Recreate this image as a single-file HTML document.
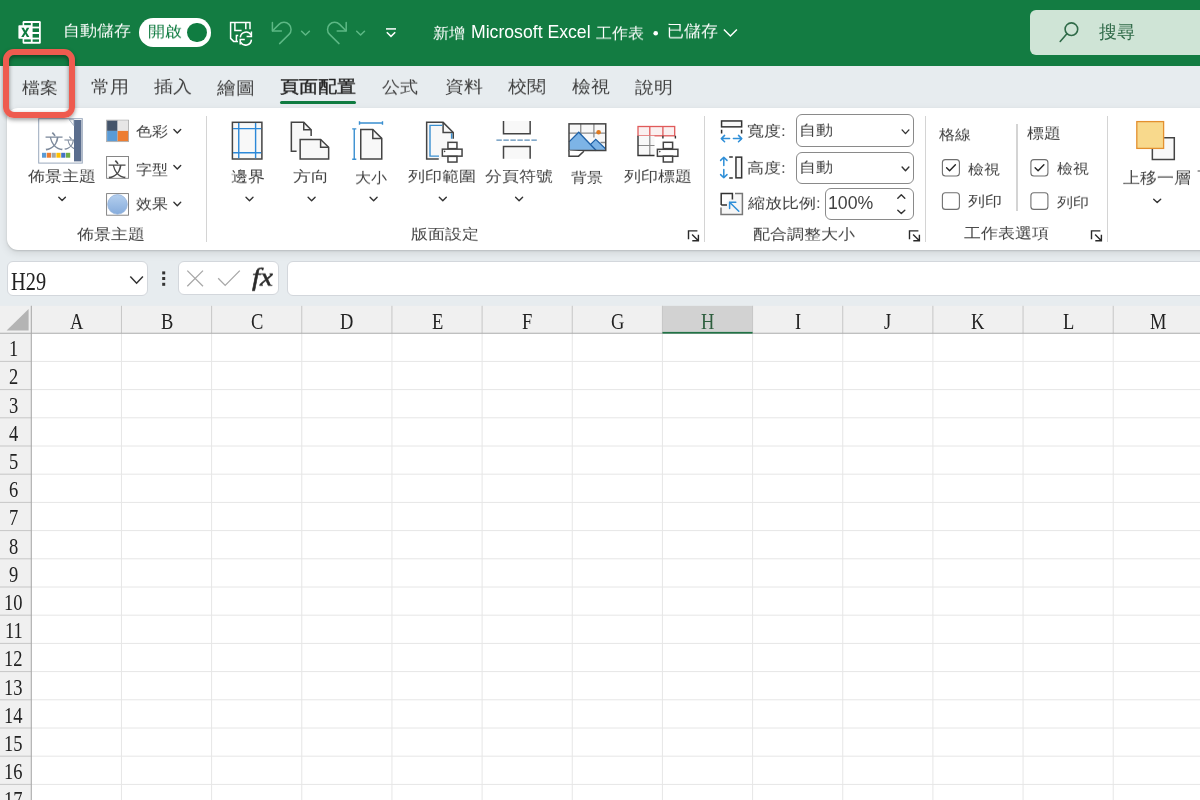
<!DOCTYPE html>
<html><head><meta charset="utf-8"><style>
html,body{margin:0;padding:0;}
body{width:1200px;height:800px;overflow:hidden;position:relative;background:#E7ECEF;font-family:'Liberation Sans',sans-serif;}
.t{position:absolute;white-space:nowrap;line-height:1;transform-origin:0 0;will-change:transform;}
svg{will-change:transform;}
.abs{position:absolute;}
</style></head><body>
<div class="abs" style="left:0;top:0;width:1200px;height:65.8px;background:#137C42"></div>
<div class="abs" style="left:139px;top:18.2px;width:72.4px;height:28.5px;border-radius:14.25px;background:#fff"></div>
<div class="abs" style="left:187.2px;top:22.6px;width:19.4px;height:19.4px;border-radius:50%;background:#107C41"></div>
<div class="abs" style="left:1029.5px;top:10.2px;width:220px;height:44.5px;border-radius:6px;background:#CFE4D6"></div>
<div class="abs" style="left:7px;top:108px;width:1230px;height:141.6px;border-radius:11px;background:#fff;box-shadow:0 1px 2px rgba(0,0,0,0.14), 0 3px 9px rgba(0,0,0,0.10)"></div>
<div class="abs" style="left:206.1px;top:116px;width:1.2px;height:125.5px;background:#D4D4D4"></div>
<div class="abs" style="left:703.9px;top:116px;width:1.2px;height:125.5px;background:#D4D4D4"></div>
<div class="abs" style="left:924.6px;top:116px;width:1.2px;height:125.5px;background:#D4D4D4"></div>
<div class="abs" style="left:1106.6px;top:116px;width:1.2px;height:125.5px;background:#D4D4D4"></div>
<div class="abs" style="left:1016.4px;top:123.8px;width:1.2px;height:87.2px;background:#D4D4D4"></div>
<div class="abs" style="left:796.3px;top:114.4px;width:117.7px;height:32.2px;border:1.2px solid #8A8A8A;border-radius:6px;box-sizing:border-box;background:#fff"></div>
<div class="abs" style="left:796.3px;top:151.5px;width:117.7px;height:32.2px;border:1.2px solid #8A8A8A;border-radius:6px;box-sizing:border-box;background:#fff"></div>
<div class="abs" style="left:825px;top:188.4px;width:89px;height:31.9px;border:1.2px solid #8A8A8A;border-radius:6px;box-sizing:border-box;background:#fff"></div>
<div class="abs" style="left:7.4px;top:261.2px;width:141px;height:34.4px;border:1px solid #D3D7DC;border-radius:6px;box-sizing:border-box;background:#fff"></div>
<div class="abs" style="left:178px;top:261.2px;width:101px;height:34px;border:1px solid #D3D7DC;border-radius:6px;box-sizing:border-box;background:#fff"></div>
<div class="abs" style="left:286.6px;top:261.1px;width:1000px;height:34.5px;border:1px solid #D3D7DC;border-radius:6px;box-sizing:border-box;background:#fff"></div>
<div class="abs" style="left:280px;top:100.8px;width:76px;height:3.2px;border-radius:1.6px;background:#107C41"></div>

<svg class="abs" style="left:0;top:0" width="1200" height="800" viewBox="0 0 1200 800">
<rect x="0" y="305.8" width="1200" height="27.399999999999977" fill="#F0F0F0"/>
<rect x="0" y="333.2" width="31.3" height="466.8" fill="#F0F0F0"/>
<rect x="31.3" y="333.2" width="1168.7" height="466.8" fill="#FFFFFF"/>
<rect x="662.42" y="305.8" width="90.16" height="27.399999999999977" fill="#D2D2D2"/>
<line x1="121.46" y1="333.2" x2="121.46" y2="800" stroke="#E6E6E6" stroke-width="1"/>
<line x1="121.46" y1="305.8" x2="121.46" y2="333.2" stroke="#C6C6C6" stroke-width="1"/>
<line x1="211.62" y1="333.2" x2="211.62" y2="800" stroke="#E6E6E6" stroke-width="1"/>
<line x1="211.62" y1="305.8" x2="211.62" y2="333.2" stroke="#C6C6C6" stroke-width="1"/>
<line x1="301.78" y1="333.2" x2="301.78" y2="800" stroke="#E6E6E6" stroke-width="1"/>
<line x1="301.78" y1="305.8" x2="301.78" y2="333.2" stroke="#C6C6C6" stroke-width="1"/>
<line x1="391.94" y1="333.2" x2="391.94" y2="800" stroke="#E6E6E6" stroke-width="1"/>
<line x1="391.94" y1="305.8" x2="391.94" y2="333.2" stroke="#C6C6C6" stroke-width="1"/>
<line x1="482.10" y1="333.2" x2="482.10" y2="800" stroke="#E6E6E6" stroke-width="1"/>
<line x1="482.10" y1="305.8" x2="482.10" y2="333.2" stroke="#C6C6C6" stroke-width="1"/>
<line x1="572.26" y1="333.2" x2="572.26" y2="800" stroke="#E6E6E6" stroke-width="1"/>
<line x1="572.26" y1="305.8" x2="572.26" y2="333.2" stroke="#C6C6C6" stroke-width="1"/>
<line x1="662.42" y1="333.2" x2="662.42" y2="800" stroke="#E6E6E6" stroke-width="1"/>
<line x1="662.42" y1="305.8" x2="662.42" y2="333.2" stroke="#C6C6C6" stroke-width="1"/>
<line x1="752.58" y1="333.2" x2="752.58" y2="800" stroke="#E6E6E6" stroke-width="1"/>
<line x1="752.58" y1="305.8" x2="752.58" y2="333.2" stroke="#C6C6C6" stroke-width="1"/>
<line x1="842.74" y1="333.2" x2="842.74" y2="800" stroke="#E6E6E6" stroke-width="1"/>
<line x1="842.74" y1="305.8" x2="842.74" y2="333.2" stroke="#C6C6C6" stroke-width="1"/>
<line x1="932.90" y1="333.2" x2="932.90" y2="800" stroke="#E6E6E6" stroke-width="1"/>
<line x1="932.90" y1="305.8" x2="932.90" y2="333.2" stroke="#C6C6C6" stroke-width="1"/>
<line x1="1023.06" y1="333.2" x2="1023.06" y2="800" stroke="#E6E6E6" stroke-width="1"/>
<line x1="1023.06" y1="305.8" x2="1023.06" y2="333.2" stroke="#C6C6C6" stroke-width="1"/>
<line x1="1113.22" y1="333.2" x2="1113.22" y2="800" stroke="#E6E6E6" stroke-width="1"/>
<line x1="1113.22" y1="305.8" x2="1113.22" y2="333.2" stroke="#C6C6C6" stroke-width="1"/>
<line x1="1203.38" y1="333.2" x2="1203.38" y2="800" stroke="#E6E6E6" stroke-width="1"/>
<line x1="1203.38" y1="305.8" x2="1203.38" y2="333.2" stroke="#C6C6C6" stroke-width="1"/>
<line x1="31.3" y1="361.40" x2="1200" y2="361.40" stroke="#E6E6E6" stroke-width="1"/>
<line x1="0" y1="361.40" x2="31.3" y2="361.40" stroke="#C6C6C6" stroke-width="1"/>
<line x1="31.3" y1="389.60" x2="1200" y2="389.60" stroke="#E6E6E6" stroke-width="1"/>
<line x1="0" y1="389.60" x2="31.3" y2="389.60" stroke="#C6C6C6" stroke-width="1"/>
<line x1="31.3" y1="417.80" x2="1200" y2="417.80" stroke="#E6E6E6" stroke-width="1"/>
<line x1="0" y1="417.80" x2="31.3" y2="417.80" stroke="#C6C6C6" stroke-width="1"/>
<line x1="31.3" y1="446.00" x2="1200" y2="446.00" stroke="#E6E6E6" stroke-width="1"/>
<line x1="0" y1="446.00" x2="31.3" y2="446.00" stroke="#C6C6C6" stroke-width="1"/>
<line x1="31.3" y1="474.20" x2="1200" y2="474.20" stroke="#E6E6E6" stroke-width="1"/>
<line x1="0" y1="474.20" x2="31.3" y2="474.20" stroke="#C6C6C6" stroke-width="1"/>
<line x1="31.3" y1="502.40" x2="1200" y2="502.40" stroke="#E6E6E6" stroke-width="1"/>
<line x1="0" y1="502.40" x2="31.3" y2="502.40" stroke="#C6C6C6" stroke-width="1"/>
<line x1="31.3" y1="530.60" x2="1200" y2="530.60" stroke="#E6E6E6" stroke-width="1"/>
<line x1="0" y1="530.60" x2="31.3" y2="530.60" stroke="#C6C6C6" stroke-width="1"/>
<line x1="31.3" y1="558.80" x2="1200" y2="558.80" stroke="#E6E6E6" stroke-width="1"/>
<line x1="0" y1="558.80" x2="31.3" y2="558.80" stroke="#C6C6C6" stroke-width="1"/>
<line x1="31.3" y1="587.00" x2="1200" y2="587.00" stroke="#E6E6E6" stroke-width="1"/>
<line x1="0" y1="587.00" x2="31.3" y2="587.00" stroke="#C6C6C6" stroke-width="1"/>
<line x1="31.3" y1="615.20" x2="1200" y2="615.20" stroke="#E6E6E6" stroke-width="1"/>
<line x1="0" y1="615.20" x2="31.3" y2="615.20" stroke="#C6C6C6" stroke-width="1"/>
<line x1="31.3" y1="643.40" x2="1200" y2="643.40" stroke="#E6E6E6" stroke-width="1"/>
<line x1="0" y1="643.40" x2="31.3" y2="643.40" stroke="#C6C6C6" stroke-width="1"/>
<line x1="31.3" y1="671.60" x2="1200" y2="671.60" stroke="#E6E6E6" stroke-width="1"/>
<line x1="0" y1="671.60" x2="31.3" y2="671.60" stroke="#C6C6C6" stroke-width="1"/>
<line x1="31.3" y1="699.80" x2="1200" y2="699.80" stroke="#E6E6E6" stroke-width="1"/>
<line x1="0" y1="699.80" x2="31.3" y2="699.80" stroke="#C6C6C6" stroke-width="1"/>
<line x1="31.3" y1="728.00" x2="1200" y2="728.00" stroke="#E6E6E6" stroke-width="1"/>
<line x1="0" y1="728.00" x2="31.3" y2="728.00" stroke="#C6C6C6" stroke-width="1"/>
<line x1="31.3" y1="756.20" x2="1200" y2="756.20" stroke="#E6E6E6" stroke-width="1"/>
<line x1="0" y1="756.20" x2="31.3" y2="756.20" stroke="#C6C6C6" stroke-width="1"/>
<line x1="31.3" y1="784.40" x2="1200" y2="784.40" stroke="#E6E6E6" stroke-width="1"/>
<line x1="0" y1="784.40" x2="31.3" y2="784.40" stroke="#C6C6C6" stroke-width="1"/>
<line x1="31.3" y1="812.60" x2="1200" y2="812.60" stroke="#E6E6E6" stroke-width="1"/>
<line x1="0" y1="812.60" x2="31.3" y2="812.60" stroke="#C6C6C6" stroke-width="1"/>
<line x1="0" y1="333.2" x2="1200" y2="333.2" stroke="#ABABAB" stroke-width="1.1"/>
<line x1="31.3" y1="305.8" x2="31.3" y2="800" stroke="#ABABAB" stroke-width="1.1"/>
<rect x="662.42" y="331.90" width="90.16" height="1.7" fill="#217346"/>
<path d="M6.6 330.6 L28.6 309 L28.6 330.6 Z" fill="#B4B4B4"/>
</svg>
<svg class="abs" style="left:0;top:0" width="1200" height="800" viewBox="0 0 1200 800">
<!-- Excel logo -->
<rect x="22.6" y="21" width="18.2" height="22.8" rx="1.3" fill="#fff"/>
<rect x="24.2" y="23" width="6.6" height="2.6" fill="#107C41"/>
<rect x="24.2" y="39.4" width="6.6" height="2.4" fill="#107C41"/>
<rect x="32.6" y="23" width="6.4" height="3.6" fill="#107C41"/>
<rect x="32.6" y="28.4" width="6.4" height="3.6" fill="#107C41"/>
<rect x="32.6" y="34" width="6.4" height="3.6" fill="#107C41"/>
<rect x="32.6" y="39.4" width="6.4" height="2.4" fill="#107C41"/>
<rect x="18.4" y="25.2" width="13.2" height="13.6" rx="0.8" fill="#fff"/>
<path d="M21.3 27.8 L23.8 27.8 L25.3 30.7 L26.8 27.8 L29.3 27.8 L26.6 32.4 L29.4 37 L26.9 37 L25.3 34.1 L23.7 37 L21.2 37 L24 32.4 Z" fill="#107C41"/>
<!-- save icon -->
<g fill="none" stroke="#fff" stroke-width="1.5" stroke-linejoin="miter">
<path d="M238 41.4 L233.6 41.4 L230.6 38.4 L230.6 22.4 L250 22.4 L250 29.2"/>
<path d="M234.9 22.4 L234.9 30.6 L241.6 30.6"/>
<path d="M245.8 22.4 L245.8 29.2"/>
<path d="M236.4 41.4 L236.4 35.6 L238.2 35.6"/>
<path d="M240.3 37.4 A5.8 5.8 0 0 1 251.2 35.2"/>
<path d="M251.4 39.6 A5.8 5.8 0 0 1 240.6 42.2"/>
<path d="M251.4 31.6 L251.4 36.6 L246.6 36.6"/>
<path d="M240.2 44.6 L240.2 39.6 L244.8 39.6"/>
</g>
<!-- undo/redo -->
<g fill="none" stroke="#5DB885" stroke-width="1.5" stroke-linecap="round" stroke-linejoin="round">
<path d="M272.4 22.4 L272.4 31 L281.4 31"/>
<path d="M272.6 30.8 L279 24.4 A7 7 0 0 1 289 34.4 L279.6 43.6"/>
<path d="M301.6 31.2 L305.5 35 L309.4 31.2"/>
<g transform="translate(618.6 0) scale(-1 1)">
<path d="M272.4 22.4 L272.4 31 L281.4 31"/>
<path d="M272.6 30.8 L279 24.4 A7 7 0 0 1 289 34.4 L279.6 43.6"/>
</g>
<path d="M356.7 31.2 L360.6 35 L364.5 31.2"/>
</g>
<g fill="none" stroke="#fff" stroke-width="1.5">
<path d="M386 28.9 L396 28.9"/>
<path d="M386.8 32.2 L391 36.4 L395.2 32.2"/>
<path d="M723.9 29.5 L730.4 36 L736.9 29.5"/>
</g>
<circle cx="655.7" cy="33.3" r="2.3" fill="#fff"/>
<!-- search -->
<g fill="none" stroke="#2F6A48" stroke-width="1.6" stroke-linecap="round">
<circle cx="1071.4" cy="29.2" r="6.3"/>
<path d="M1066.9 33.8 L1060.2 41.5"/>
</g>
<!-- theme icon -->
<rect x="38.7" y="118.7" width="43.6" height="44.4" fill="#fff" stroke="#9AA8BC" stroke-width="1"/>
<text x="45" y="148.3" font-size="19" fill="#7D8A9C" font-family="'Liberation Sans',sans-serif">文</text>
<text x="63.6" y="147.8" font-size="13.5" fill="#7D8A9C" font-family="'Liberation Sans',sans-serif">文</text>
<rect x="74" y="120" width="7.4" height="41.4" fill="#5A6D8D"/>
<path d="M69.2 119.6 L73.8 119.6 L73.8 125.6 Z" fill="#F4F4F4" stroke="#9AA8BC" stroke-width="0.8"/>
<rect x="42" y="152.8" width="4.2" height="4.9" fill="#5B9BD5"/>
<rect x="46.8" y="152.8" width="4.2" height="4.9" fill="#ED7D31"/>
<rect x="51.6" y="152.8" width="4.2" height="4.9" fill="#A5A5A5"/>
<rect x="56.4" y="152.8" width="4.2" height="4.9" fill="#FFC000"/>
<rect x="61.2" y="152.8" width="4.2" height="4.9" fill="#4472C4"/>
<rect x="66" y="152.8" width="4.2" height="4.9" fill="#70AD47"/>
<!-- colors icon -->
<rect x="106.6" y="120.2" width="21.9" height="21.4" fill="#fff" stroke="#A8A8A8" stroke-width="0.9"/>
<rect x="107.1" y="120.7" width="10.5" height="10.2" fill="#44546A"/>
<rect x="117.6" y="120.7" width="10.5" height="10.2" fill="#E7E6E6"/>
<rect x="107.1" y="130.9" width="10.5" height="10.2" fill="#5B9BD5"/>
<rect x="117.6" y="130.9" width="10.5" height="10.2" fill="#ED7D31"/>
<!-- fonts icon -->
<rect x="106.6" y="156.5" width="21.9" height="21.8" fill="#fff" stroke="#7A7A7A" stroke-width="0.9"/>
<text x="107.6" y="176" font-size="19" fill="#4A4A4A" font-family="'Liberation Serif',serif">文</text>
<!-- effects icon -->
<defs><linearGradient id="eg" x1="0" y1="0" x2="0" y2="1"><stop offset="0" stop-color="#B4CFEE"/><stop offset="1" stop-color="#86ACDC"/></linearGradient></defs>
<rect x="106.6" y="193.6" width="21.9" height="21.6" fill="#fff" stroke="#7A7A7A" stroke-width="0.9"/>
<circle cx="117.5" cy="204.4" r="9.8" fill="url(#eg)" stroke="#93B3DC" stroke-width="0.8"/>
<!-- margins -->
<rect x="232.4" y="122.3" width="29.5" height="36.7" fill="#F8F8F8" stroke="#444" stroke-width="1.5"/>
<path d="M238.75 123 V158.3 M255.6 123 V158.3 M233.1 128.6 H261.2 M233.1 152.8 H261.2" stroke="#2B88D8" stroke-width="1.4" fill="none"/>
<!-- orientation -->
<g stroke="#444" stroke-width="1.5" fill="#F8F8F8">
<path d="M291.35 122.35 H303.75 L311.15 129.75 V151.25 H291.35 Z" stroke="none"/>
<path d="M296.6 151.25 H291.35 V122.35 H303.75 L311.15 129.75 V136" fill="none"/>
<path d="M303.75 122.35 V129.8 H311.15" fill="none"/>
<path d="M300.15 139.5 H320.6 L328.65 147.2 V158.95 H300.15 Z"/>
<path d="M320.6 139.5 V147.2 H328.65" fill="none"/>
</g>
<!-- size -->
<g stroke="#3A8FD0" stroke-width="1.4" fill="none">
<path d="M359.5 123 H382.5 M359.5 121.2 V124.8 M382.5 121.2 V124.8"/>
<path d="M354.25 128.6 V159.5 M352.2 128.9 H356.3 M352.2 159.2 H356.3"/>
</g>
<g stroke="#444" stroke-width="1.5" fill="#F8F8F8">
<path d="M360.75 129.5 H372.8 L381.75 138.4 V158.95 H360.75 Z"/>
<path d="M372.8 129.5 V138.4 H381.75" fill="none"/>
</g>
<!-- print area -->
<g stroke="#444" stroke-width="1.5" fill="#F8F8F8">
<path d="M426.65 122.35 H443.1 L453.25 132.5 V158.95 H426.65 Z" stroke="none"/>
<path d="M438.75 158.95 H426.65 V122.35 H443.1 L453.25 132.5 V138.75" fill="none"/>
<path d="M443.1 122.35 V132.5 H453.25" fill="none"/>
</g>
<path d="M439 156.1 H430 V125.4 H442.3 M451.6 133.3 V138.7" stroke="#3A8FD0" stroke-width="1.4" fill="none"/>
<g stroke="#444" stroke-width="1.5" fill="#fff">
<rect x="447.95" y="142.35" width="9" height="6.3"/>
<rect x="442.35" y="149.15" width="19.7" height="7"/>
<rect x="447.95" y="156.35" width="9" height="5.7"/>
</g>
<circle cx="444.6" cy="151.4" r="0.8" fill="#444"/>
<!-- breaks -->
<rect x="503.5" y="120.9" width="26.65" height="12.75" fill="#F8F8F8"/>
<rect x="503.5" y="146.5" width="26.65" height="12.25" fill="#F8F8F8"/>
<g stroke="#444" stroke-width="1.5" fill="none">
<path d="M503.5 120.9 V133.65 H530.15 V120.9"/>
<path d="M503.5 158.75 V146.5 H530.15 V158.75"/>
</g>
<path d="M496.4 140.1 H537.2" stroke="#5B8DB8" stroke-width="1.4" stroke-dasharray="5.4 1.6" fill="none"/>
<!-- background -->
<rect x="569" y="123.85" width="36.75" height="26.65" fill="#F8F8F8"/>
<path d="M580.75 123.85 V140 M593.9 123.85 V137.5 M569 133.1 H605.75 M600.5 142.5 H605.75" stroke="#8A8A8A" stroke-width="1.3" fill="none"/>
<path d="M569 141.9 L578.75 132.2 L590.3 144.6 L595.75 139.4 L605.75 149 V150.5 H569 Z" fill="#7DB4E6"/>
<path d="M569 141.9 L578.75 132.2 L596.4 150.8 M590.3 144.6 L595.75 139.4 L605.75 149" stroke="#1F62A8" stroke-width="1.3" fill="none"/>
<rect x="569" y="123.85" width="36.75" height="26.65" fill="none" stroke="#444" stroke-width="1.5"/>
<path d="M569 150.5 V156.15 H578.6 L583.9 151.25" stroke="#444" stroke-width="1.5" fill="#fff"/>
<circle cx="598.6" cy="132.2" r="2.3" fill="#E07A1F"/>
<!-- print titles -->
<rect x="638" y="126.5" width="36.7" height="9.3" fill="#FAF0F0" stroke="#E05A5A" stroke-width="1.3"/>
<path d="M649.8 126.5 V135.8 M662.9 126.5 V135.8" stroke="#E05A5A" stroke-width="1.3"/>
<rect x="638" y="135.8" width="16.5" height="19.7" fill="#F8F8F8"/>
<path d="M638 145.5 H654.5 M649.8 135.8 V155.5" stroke="#8A8A8A" stroke-width="1.2" fill="none"/>
<path d="M638 135.8 V155.5 H654.5 M662.9 135.8 V138.6 M675.4 135.8 V138.6" stroke="#333" stroke-width="1.4" fill="none"/>
<g stroke="#444" stroke-width="1.5" fill="#fff">
<rect x="663.3" y="142.3" width="9.3" height="6.3"/>
<rect x="657.4" y="149.3" width="20.5" height="7"/>
<rect x="663.3" y="156.2" width="9.3" height="5.8"/>
</g>
<circle cx="659.8" cy="151.6" r="0.8" fill="#444"/>
<!-- width / height / scale -->
<rect x="721.55" y="120.95" width="20.1" height="5.9" fill="#F8F8F8" stroke="#333" stroke-width="1.5"/>
<path d="M721.6 129.8 V133.6 M741.6 129.8 V133.6" stroke="#333" stroke-width="1.5"/>
<g stroke="#2F8FD8" stroke-width="1.5" fill="none" stroke-linecap="round" stroke-linejoin="round">
<path d="M721.3 138.6 H729.6 M724.6 135.4 L721.3 138.6 L724.6 141.8"/>
<path d="M733.4 138.6 H741.8 M738.5 135.4 L741.8 138.6 L738.5 141.8"/>
<path d="M723.8 157.2 V165.6 M720.6 160.4 L723.8 157.2 L727 160.4"/>
<path d="M723.8 169.4 V177.8 M720.6 174.6 L723.8 177.8 L727 174.6"/>
</g>
<path d="M729.2 157 H732.8 M729.2 178 H732.8" stroke="#333" stroke-width="1.5"/>
<rect x="735.95" y="157.15" width="5.7" height="20.7" fill="#F8F8F8" stroke="#333" stroke-width="1.5"/>
<path d="M735 193.4 H742.4 V214.6 H721 V207.4" stroke="#777" stroke-width="1.5" fill="#F6F6F6"/>
<path d="M721.2 205 V193.4 H732.4 V199.6 M721.2 205 H727" stroke="#333" stroke-width="1.5" fill="none"/>
<g stroke="#2F8FD8" stroke-width="1.5" fill="none" stroke-linecap="round">
<path d="M738.8 211.2 L729.6 202.2 M729.6 202.2 H735.8 M729.6 202.2 V208.4"/>
</g>
<!-- bring forward -->
<path d="M1164.1 137.65 H1174.3 V159.6 H1152.35 V149" stroke="#444" stroke-width="1.5" fill="#F8F8F8"/>
<rect x="1136.8" y="121.6" width="26.8" height="26.8" fill="#F8D98C" stroke="#E3902F" stroke-width="1.3"/>
<!-- chevrons -->
<g fill="none" stroke="#333" stroke-width="1.4" stroke-linecap="round" stroke-linejoin="round">
<path d="M58.8 197.3 L62.1 200.6 L65.4 197.3"/>
<path d="M246 197.3 L249.5 200.8 L253 197.3"/>
<path d="M308.1 197.3 L311.6 200.8 L315.1 197.3"/>
<path d="M370.1 197.3 L373.6 200.8 L377.1 197.3"/>
<path d="M439.3 197.3 L442.8 200.8 L446.3 197.3"/>
<path d="M515.6 197.3 L519.1 200.8 L522.6 197.3"/>
<path d="M1153.7 199.2 L1157.2 202.5 L1160.7 199.2"/>
<path d="M173.9 129.5 L177.3 133 L180.7 129.5"/>
<path d="M173.9 165.5 L177.3 169 L180.7 165.5"/>
<path d="M173.9 202.3 L177.3 205.8 L180.7 202.3"/>
<path d="M902.1 129.9 L905.5 133.6 L908.9 129.9"/>
<path d="M902.1 167 L905.5 170.7 L908.9 167"/>
<path d="M897.8 198.2 L901.3 194.8 L904.8 198.2"/>
<path d="M897.8 210.2 L901.3 213.6 L904.8 210.2"/>
</g>
<!-- dialog launchers -->
<g fill="none" stroke="#2A2A2A" stroke-width="1.4">
<path transform="translate(688.5 230.9)" d="M0 8.4 V0 H8.9 M3.6 3.6 L9.9 9.8 M9.9 3.9 V9.8 H3.8"/>
<path transform="translate(909.5 230.9)" d="M0 8.4 V0 H8.9 M3.6 3.6 L9.9 9.8 M9.9 3.9 V9.8 H3.8"/>
<path transform="translate(1091.5 230.9)" d="M0 8.4 V0 H8.9 M3.6 3.6 L9.9 9.8 M9.9 3.9 V9.8 H3.8"/>
</g>
<!-- checkboxes -->
<g fill="#fff" stroke="#707070" stroke-width="1.1">
<rect x="942.4" y="159.6" width="17" height="16.4" rx="3"/>
<rect x="942.4" y="192.8" width="17" height="16.6" rx="3"/>
<rect x="1030.9" y="159.6" width="17" height="16.4" rx="3"/>
<rect x="1030.9" y="192.8" width="17" height="16.6" rx="3"/>
</g>
<g fill="none" stroke="#242424" stroke-width="1.4" stroke-linecap="round" stroke-linejoin="round">
<path d="M946.6 167.8 L949.6 170.8 L955.4 164.8"/>
<path d="M1035.1 167.8 L1038.1 170.8 L1043.9 164.8"/>
</g>
<!-- formula bar -->
<path d="M130.3 276.5 L136.6 283.2 L142.9 276.5" fill="none" stroke="#333" stroke-width="1.5"/>
<rect x="162.2" y="271.4" width="3" height="3" fill="#333"/>
<rect x="162.2" y="277" width="3" height="3" fill="#333"/>
<rect x="162.2" y="282.8" width="3" height="3" fill="#333"/>
<path d="M187.3 270.6 L203 286.3 M203 270.6 L187.3 286.3" stroke="#A8A8A8" stroke-width="1.3"/>
<path d="M218.2 278.2 L225.2 285.4 L239.8 270.6" fill="none" stroke="#A8A8A8" stroke-width="1.3"/>
<rect x="1197.6" y="170.4" width="2.4" height="1.2" fill="#666"/>

</svg>
<div class="t" style="left:63.10px;top:24.08px;font-size:16.89px;color:#fff;font-family:'Liberation Sans',sans-serif;font-weight:normal;font-style:normal;transform:scaleY(0.9131);">自動儲存</div>
<div class="t" style="left:148.01px;top:25.16px;font-size:16.58px;color:#107C41;font-family:'Liberation Sans',sans-serif;font-weight:normal;font-style:normal;transform:scaleY(0.8889);">開啟</div>
<div class="t" style="left:432.67px;top:24.94px;font-size:16.42px;color:#fff;font-family:'Liberation Sans',sans-serif;font-weight:normal;font-style:normal;transform:scaleY(0.9450);">新增</div>
<div class="t" style="left:470.59px;top:23.52px;font-size:17.65px;color:#fff;font-family:'Liberation Sans',sans-serif;font-weight:normal;font-style:normal;">Microsoft Excel</div>
<div class="t" style="left:595.97px;top:24.63px;font-size:16.38px;color:#fff;font-family:'Liberation Sans',sans-serif;font-weight:normal;font-style:normal;transform:scaleY(0.9574);">工作表</div>
<div class="t" style="left:666.81px;top:24.47px;font-size:16.52px;color:#fff;font-family:'Liberation Sans',sans-serif;font-weight:normal;font-style:normal;transform:scaleY(0.9598);">已儲存</div>
<div class="t" style="left:1098.82px;top:22.65px;font-size:18.31px;color:#2F6A48;font-family:'Liberation Sans',sans-serif;font-weight:normal;font-style:normal;">搜尋</div>
<div class="t" style="left:21.72px;top:79.66px;font-size:18.49px;color:#424242;font-family:'Liberation Sans',sans-serif;font-weight:normal;font-style:normal;transform:scaleY(0.8762);">檔案</div>
<div class="t" style="left:90.69px;top:78.98px;font-size:18.82px;color:#424242;font-family:'Liberation Sans',sans-serif;font-weight:normal;font-style:normal;transform:scaleY(0.9159);">常用</div>
<div class="t" style="left:153.56px;top:79.17px;font-size:18.59px;color:#424242;font-family:'Liberation Sans',sans-serif;font-weight:normal;font-style:normal;transform:scaleY(0.8892);">插入</div>
<div class="t" style="left:217.00px;top:78.62px;font-size:19.05px;color:#424242;font-family:'Liberation Sans',sans-serif;font-weight:normal;font-style:normal;transform:scaleY(0.9245);">繪圖</div>
<div class="t" style="left:279.99px;top:78.83px;font-size:18.94px;color:#242424;font-family:'Liberation Sans',sans-serif;font-weight:normal;font-style:normal;transform:scaleY(0.8909);-webkit-text-stroke:0.45px #242424;">頁面配置</div>
<div class="t" style="left:381.82px;top:78.99px;font-size:18.46px;color:#424242;font-family:'Liberation Sans',sans-serif;font-weight:normal;font-style:normal;transform:scaleY(0.9141);">公式</div>
<div class="t" style="left:444.75px;top:79.01px;font-size:18.65px;color:#424242;font-family:'Liberation Sans',sans-serif;font-weight:normal;font-style:normal;transform:scaleY(0.8773);">資料</div>
<div class="t" style="left:508.30px;top:78.99px;font-size:18.92px;color:#424242;font-family:'Liberation Sans',sans-serif;font-weight:normal;font-style:normal;transform:scaleY(0.8920);">校閱</div>
<div class="t" style="left:571.51px;top:79.17px;font-size:18.67px;color:#424242;font-family:'Liberation Sans',sans-serif;font-weight:normal;font-style:normal;transform:scaleY(0.8944);">檢視</div>
<div class="t" style="left:634.81px;top:79.16px;font-size:19.42px;color:#424242;font-family:'Liberation Sans',sans-serif;font-weight:normal;font-style:normal;transform:scaleY(0.8690);">說明</div>
<div class="t" style="left:28.00px;top:170.40px;font-size:16.69px;color:#424242;font-family:'Liberation Sans',sans-serif;font-weight:normal;font-style:normal;transform:scaleY(0.8558);">佈景主題</div>
<div class="t" style="left:231.40px;top:169.80px;font-size:16.68px;color:#424242;font-family:'Liberation Sans',sans-serif;font-weight:normal;font-style:normal;transform:scaleY(0.8931);">邊界</div>
<div class="t" style="left:293.22px;top:170.40px;font-size:17.60px;color:#424242;font-family:'Liberation Sans',sans-serif;font-weight:normal;font-style:normal;transform:scaleY(0.8118);">方向</div>
<div class="t" style="left:354.94px;top:169.96px;font-size:16.41px;color:#424242;font-family:'Liberation Sans',sans-serif;font-weight:normal;font-style:normal;transform:scaleY(0.8980);">大小</div>
<div class="t" style="left:407.73px;top:169.96px;font-size:16.82px;color:#424242;font-family:'Liberation Sans',sans-serif;font-weight:normal;font-style:normal;transform:scaleY(0.8670);">列印範圍</div>
<div class="t" style="left:484.97px;top:169.82px;font-size:16.72px;color:#424242;font-family:'Liberation Sans',sans-serif;font-weight:normal;font-style:normal;transform:scaleY(0.8723);">分頁符號</div>
<div class="t" style="left:571.17px;top:170.11px;font-size:16.44px;color:#424242;font-family:'Liberation Sans',sans-serif;font-weight:normal;font-style:normal;transform:scaleY(0.8688);">背景</div>
<div class="t" style="left:623.83px;top:169.96px;font-size:16.73px;color:#424242;font-family:'Liberation Sans',sans-serif;font-weight:normal;font-style:normal;transform:scaleY(0.8714);">列印標題</div>
<div class="t" style="left:1122.57px;top:170.83px;font-size:16.63px;color:#424242;font-family:'Liberation Sans',sans-serif;font-weight:normal;font-style:normal;transform:scaleY(0.9370);">上移一層</div>
<div class="t" style="left:135.68px;top:125.16px;font-size:15.90px;color:#424242;font-family:'Liberation Sans',sans-serif;font-weight:normal;font-style:normal;transform:scaleY(0.8430);">色彩</div>
<div class="t" style="left:135.52px;top:161.70px;font-size:16.06px;color:#424242;font-family:'Liberation Sans',sans-serif;font-weight:normal;font-style:normal;transform:scaleY(0.8894);">字型</div>
<div class="t" style="left:135.84px;top:197.29px;font-size:15.98px;color:#424242;font-family:'Liberation Sans',sans-serif;font-weight:normal;font-style:normal;transform:scaleY(0.9017);">效果</div>
<div class="t" style="left:77.00px;top:227.70px;font-size:16.54px;color:#424242;font-family:'Liberation Sans',sans-serif;font-weight:normal;font-style:normal;transform:scaleY(0.8637);">佈景主題</div>
<div class="t" style="left:411.26px;top:227.70px;font-size:16.79px;color:#424242;font-family:'Liberation Sans',sans-serif;font-weight:normal;font-style:normal;transform:scaleY(0.8422);">版面設定</div>
<div class="t" style="left:752.56px;top:227.56px;font-size:16.77px;color:#424242;font-family:'Liberation Sans',sans-serif;font-weight:normal;font-style:normal;transform:scaleY(0.8520);">配合調整大小</div>
<div class="t" style="left:963.67px;top:227.27px;font-size:16.70px;color:#424242;font-family:'Liberation Sans',sans-serif;font-weight:normal;font-style:normal;transform:scaleY(0.8554);">工作表選項</div>
<div class="t" style="left:747.24px;top:123.90px;font-size:17.10px;color:#424242;font-family:'Liberation Sans',sans-serif;font-weight:normal;font-style:normal;transform:scaleY(0.8557);">寬度:</div>
<div class="t" style="left:747.24px;top:161.00px;font-size:17.10px;color:#424242;font-family:'Liberation Sans',sans-serif;font-weight:normal;font-style:normal;transform:scaleY(0.8413);">高度:</div>
<div class="t" style="left:748.00px;top:197.41px;font-size:16.80px;color:#424242;font-family:'Liberation Sans',sans-serif;font-weight:normal;font-style:normal;transform:scaleY(0.8502);">縮放比例:</div>
<div class="t" style="left:798.76px;top:123.10px;font-size:17.22px;color:#424242;font-family:'Liberation Sans',sans-serif;font-weight:normal;font-style:normal;transform:scaleY(0.8648);">自動</div>
<div class="t" style="left:798.76px;top:160.10px;font-size:17.22px;color:#424242;font-family:'Liberation Sans',sans-serif;font-weight:normal;font-style:normal;transform:scaleY(0.8648);">自動</div>
<div class="t" style="left:827.58px;top:194.77px;font-size:17.70px;color:#424242;font-family:'Liberation Sans',sans-serif;font-weight:normal;font-style:normal;">100%</div>
<div class="t" style="left:938.50px;top:126.72px;font-size:16.28px;color:#424242;font-family:'Liberation Sans',sans-serif;font-weight:normal;font-style:normal;transform:scaleY(0.8922);">格線</div>
<div class="t" style="left:1027.03px;top:126.87px;font-size:16.56px;color:#424242;font-family:'Liberation Sans',sans-serif;font-weight:normal;font-style:normal;transform:scaleY(0.8675);">標題</div>
<div class="t" style="left:967.94px;top:161.67px;font-size:16.28px;color:#424242;font-family:'Liberation Sans',sans-serif;font-weight:normal;font-style:normal;transform:scaleY(0.8551);">檢視</div>
<div class="t" style="left:1057.04px;top:161.67px;font-size:15.97px;color:#424242;font-family:'Liberation Sans',sans-serif;font-weight:normal;font-style:normal;transform:scaleY(0.8715);">檢視</div>
<div class="t" style="left:967.93px;top:194.88px;font-size:16.79px;color:#424242;font-family:'Liberation Sans',sans-serif;font-weight:normal;font-style:normal;transform:scaleY(0.8376);">列印</div>
<div class="t" style="left:1057.04px;top:194.88px;font-size:16.47px;color:#424242;font-family:'Liberation Sans',sans-serif;font-weight:normal;font-style:normal;transform:scaleY(0.8536);">列印</div>
<div class="t" style="left:252.01px;top:264.70px;font-size:29.14px;color:#2A2A2A;font-family:'Liberation Serif',serif;font-weight:normal;font-style:italic;transform:scaleY(0.8578);-webkit-text-stroke:0.6px #2A2A2A;">fx</div>
<div class="t" style="left:11.09px;top:268.76px;font-size:20.36px;color:#222;font-family:'Liberation Serif',serif;font-weight:normal;font-style:normal;transform:scaleY(1.2240);">H29</div>
<div class="t" style="left:69.63px;top:310.03px;font-size:18.5px;color:#222;font-family:'Liberation Serif',serif;transform:scaleY(1.24)">A</div>
<div class="t" style="left:160.53px;top:309.80px;font-size:18.5px;color:#222;font-family:'Liberation Serif',serif;transform:scaleY(1.24)">B</div>
<div class="t" style="left:250.69px;top:309.80px;font-size:18.5px;color:#222;font-family:'Liberation Serif',serif;transform:scaleY(1.24)">C</div>
<div class="t" style="left:340.29px;top:309.80px;font-size:18.5px;color:#222;font-family:'Liberation Serif',serif;transform:scaleY(1.24)">D</div>
<div class="t" style="left:431.56px;top:309.80px;font-size:18.5px;color:#222;font-family:'Liberation Serif',serif;transform:scaleY(1.24)">E</div>
<div class="t" style="left:522.09px;top:309.80px;font-size:18.5px;color:#222;font-family:'Liberation Serif',serif;transform:scaleY(1.24)">F</div>
<div class="t" style="left:610.59px;top:309.80px;font-size:18.5px;color:#222;font-family:'Liberation Serif',serif;transform:scaleY(1.24)">G</div>
<div class="t" style="left:700.84px;top:309.80px;font-size:18.5px;color:#2E5E3E;font-family:'Liberation Serif',serif;transform:scaleY(1.24)">H</div>
<div class="t" style="left:794.51px;top:309.80px;font-size:18.5px;color:#222;font-family:'Liberation Serif',serif;transform:scaleY(1.24)">I</div>
<div class="t" style="left:884.21px;top:309.80px;font-size:18.5px;color:#222;font-family:'Liberation Serif',serif;transform:scaleY(1.24)">J</div>
<div class="t" style="left:971.13px;top:309.80px;font-size:18.5px;color:#222;font-family:'Liberation Serif',serif;transform:scaleY(1.24)">K</div>
<div class="t" style="left:1062.77px;top:309.92px;font-size:18.5px;color:#222;font-family:'Liberation Serif',serif;transform:scaleY(1.24)">L</div>
<div class="t" style="left:1150.07px;top:309.80px;font-size:18.5px;color:#222;font-family:'Liberation Serif',serif;transform:scaleY(1.24)">M</div>
<div class="t" style="left:8.90px;top:337.33px;font-size:18.5px;color:#222;font-family:'Liberation Serif',serif;transform:scaleY(1.24)">1</div>
<div class="t" style="left:9.27px;top:365.42px;font-size:18.5px;color:#222;font-family:'Liberation Serif',serif;transform:scaleY(1.24)">2</div>
<div class="t" style="left:9.08px;top:393.62px;font-size:18.5px;color:#222;font-family:'Liberation Serif',serif;transform:scaleY(1.24)">3</div>
<div class="t" style="left:9.18px;top:421.70px;font-size:18.5px;color:#222;font-family:'Liberation Serif',serif;transform:scaleY(1.24)">4</div>
<div class="t" style="left:8.99px;top:449.90px;font-size:18.5px;color:#222;font-family:'Liberation Serif',serif;transform:scaleY(1.24)">5</div>
<div class="t" style="left:9.08px;top:478.10px;font-size:18.5px;color:#222;font-family:'Liberation Serif',serif;transform:scaleY(1.24)">6</div>
<div class="t" style="left:8.80px;top:506.30px;font-size:18.5px;color:#222;font-family:'Liberation Serif',serif;transform:scaleY(1.24)">7</div>
<div class="t" style="left:9.18px;top:534.50px;font-size:18.5px;color:#222;font-family:'Liberation Serif',serif;transform:scaleY(1.24)">8</div>
<div class="t" style="left:9.27px;top:562.82px;font-size:18.5px;color:#222;font-family:'Liberation Serif',serif;transform:scaleY(1.24)">9</div>
<div class="t" style="left:4.09px;top:590.90px;font-size:18.5px;color:#222;font-family:'Liberation Serif',serif;transform:scaleY(1.24)">10</div>
<div class="t" style="left:4.64px;top:619.33px;font-size:18.5px;color:#222;font-family:'Liberation Serif',serif;transform:scaleY(1.24)">11</div>
<div class="t" style="left:4.18px;top:647.42px;font-size:18.5px;color:#222;font-family:'Liberation Serif',serif;transform:scaleY(1.24)">12</div>
<div class="t" style="left:4.09px;top:675.62px;font-size:18.5px;color:#222;font-family:'Liberation Serif',serif;transform:scaleY(1.24)">13</div>
<div class="t" style="left:3.90px;top:703.82px;font-size:18.5px;color:#222;font-family:'Liberation Serif',serif;transform:scaleY(1.24)">14</div>
<div class="t" style="left:4.09px;top:732.02px;font-size:18.5px;color:#222;font-family:'Liberation Serif',serif;transform:scaleY(1.24)">15</div>
<div class="t" style="left:4.00px;top:760.10px;font-size:18.5px;color:#222;font-family:'Liberation Serif',serif;transform:scaleY(1.24)">16</div>
<div class="t" style="left:4.00px;top:788.42px;font-size:18.5px;color:#222;font-family:'Liberation Serif',serif;transform:scaleY(1.24)">17</div>
<div class="abs" style="left:2.7px;top:49.3px;width:71.9px;height:68.3px;border:6.9px solid #EE5B4F;border-radius:11px;box-sizing:border-box;box-shadow:0 2px 4px rgba(0,0,0,0.38), inset 0 2px 4px rgba(0,0,0,0.45)"></div>

</body></html>
